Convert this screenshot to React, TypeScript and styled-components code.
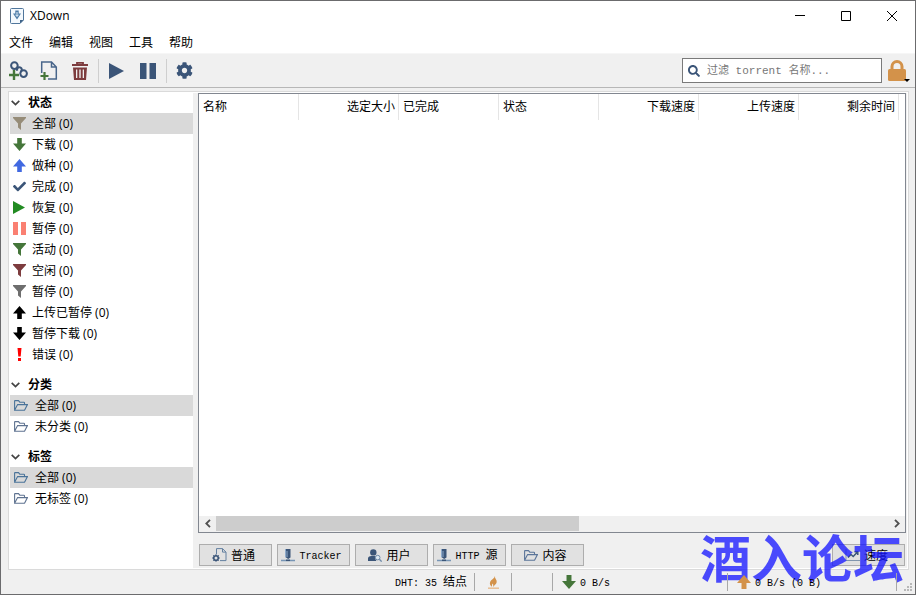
import React from "react";
import styled, { createGlobalStyle, css } from "styled-components";
import { FaCheck, FaCog, FaSearch } from "react-icons/fa";

const navy = "#3b5578";
const green = "#45763a";
const orange = "#d3924a";
const maroon = "#7d3c3e";

const Global = createGlobalStyle`
  * { box-sizing: border-box; }
  body {
    margin: 0;
    background: #f0f0f0;
    color: #000;
    font: 12px/16px "Open Sans", "Noto Sans CJK SC", sans-serif;
  }
  button, input { font: inherit; color: inherit; border-radius: 0; }
  svg { display: block; flex: none; }
`;

const Window = styled.div`
  position: relative;
  display: flex;
  flex-direction: column;
  min-height: 100vh;
  border: 1px solid #6b6b6d;
  background: #f0f0f0;
`;

const TitleBar = styled.header`
  display: flex;
  align-items: center;
  height: 30px;
  padding-left: 9px;
  gap: 6px;
  background: #fff;
`;

const Title = styled.h1`
  flex: 1;
  margin: 0;
  font-size: 12px;
  font-weight: 400;
`;

const Caption = styled.div`
  display: flex;
`;

const PlainButton = styled.button`
  display: flex;
  align-items: center;
  justify-content: center;
  padding: 0;
  border: 0;
  background: transparent;
`;

const CaptionButton = styled(PlainButton)`
  width: 46px;
  height: 29px;
`;

const MenuBar = styled.nav`
  display: flex;
  align-items: center;
  gap: 16px;
  height: 22px;
  padding: 2px 0 0 8px;
  background: #fff;
`;

const Toolbar = styled.div`
  display: flex;
  align-items: center;
  height: 35px;
  padding: 0 5px 0 7px;
  border-top: 1px solid #f6f6f6;
  border-bottom: 1px solid #b7b7b7;
`;

const ToolButton = styled(PlainButton)`
  width: 31px;
  height: 28px;
  color: ${navy};
  &:first-child { width: 25px; padding-right: 4px; }
`;

const ToolSeparator = styled.span`
  width: 1px;
  height: 24px;
  margin: 0 2px 0 3px;
  background: #cfcfcf;
`;

const SearchBox = styled.label`
  display: flex;
  align-items: center;
  gap: 7px;
  width: 200px;
  height: 25px;
  margin-left: auto;
  padding: 0 5px;
  border: 1px solid #7a7a7a;
  background: #fff;
  color: ${navy};
`;

const SearchInput = styled.input`
  flex: 1;
  min-width: 0;
  padding: 0;
  border: 0;
  outline: 0;
  background: transparent;
  font: 11px/16px "Liberation Mono", "Noto Sans CJK SC", monospace;
  &::placeholder { color: #777; opacity: 1; }
`;

const LockButton = styled(PlainButton)`
  position: relative;
  width: 28px;
  height: 26px;
  padding-left: 2px;
`;

const DropMark = styled.span`
  position: absolute;
  right: 0;
  bottom: 2px;
  border: 3px solid transparent;
  border-top-color: #000;
  border-bottom: 0;
`;

const Frame = styled.main`
  display: flex;
  flex: 1;
  margin: 3px 6px 0 7px;
  padding: 1px;
  border: 1px solid #dadada;
  background: #fff;
`;

const Sidebar = styled.aside`
  width: 183px;
`;

const Section = styled.section`
  & + & { margin-top: 10px; }
`;

const SectionTitle = styled.h2`
  display: flex;
  align-items: center;
  gap: 8px;
  height: 20px;
  margin: 0;
  padding-left: 1px;
  font-size: 12px;
  font-weight: 700;
`;

const List = styled.ul`
  margin: 0;
  padding: 0;
  list-style: none;
`;

const FilterRow = styled.button<{ $selected?: boolean; $folder?: boolean }>`
  display: flex;
  align-items: center;
  gap: ${(p) => (p.$folder ? 7 : 6)}px;
  width: 100%;
  height: 21px;
  padding: 0 0 0 ${(p) => (p.$folder ? 4 : 3)}px;
  border: 0;
  background: ${(p) => (p.$selected ? "#d9d9d9" : "transparent")};
  text-align: left;
`;

const Pane = styled.div`
  display: flex;
  flex: 1;
  flex-direction: column;
  min-width: 0;
  padding: 0 1px 2px 5px;
  background: #f0f0f0;
`;

const ListBox = styled.div`
  display: flex;
  flex: 1;
  flex-direction: column;
  border: 1px solid #828790;
  background: #fff;
`;

const TableArea = styled.div`
  flex: 1;
  overflow: hidden;
`;

const Table = styled.table`
  width: 700px;
  table-layout: fixed;
  border-collapse: separate;
  border-spacing: 0;
`;

const Th = styled.th<{ $right?: boolean }>`
  height: 26px;
  padding: 0 3px 0 4px;
  border-right: 1px solid #e5e5e5;
  font-weight: 400;
  text-align: ${(p) => (p.$right ? "right" : "left")};
`;

const ScrollBar = styled.div`
  display: flex;
  height: 16px;
  padding-bottom: 1px;
  background: #f0f0f0;
`;

const ScrollArrow = styled(PlainButton)`
  width: 17px;
`;

const ScrollTrack = styled.div`
  flex: 1;
`;

const ScrollThumb = styled.div`
  width: 54%;
  height: 100%;
  background: #cdcdcd;
`;

const Tabs = styled.div`
  display: flex;
  gap: 5px;
  padding: 11px 1px 0 1px;
`;

const simSun = css`
  font-family: "Liberation Mono", "Noto Sans CJK SC", monospace;
`;

const TabButton = styled.button<{ $last?: boolean }>`
  display: flex;
  align-items: center;
  justify-content: center;
  gap: 4px;
  width: 73px;
  height: 22px;
  margin-left: ${(p) => (p.$last ? "auto" : "0")};
  padding: 0 4px 0 0;
  border: 1px solid #adadad;
  background: #e1e1e1;
  white-space: nowrap;
  ${simSun}
`;

const Label = styled.span`
  padding-top: 3px;
`;

const Latin = styled.span`
  font-size: 10px;
  white-space: pre;
`;

const StatusBar = styled.footer`
  position: relative;
  z-index: 1;
  display: flex;
  align-items: center;
  justify-content: flex-end;
  height: 24px;
  padding-right: 2px;
  ${simSun}
`;

const StatusItem = styled.div<{ $width?: number }>`
  display: flex;
  align-items: center;
  gap: 4px;
  width: ${(p) => (p.$width ? `${p.$width}px` : "auto")};
  height: 18px;
  padding: 0 7px 0 9px;
  border-right: 1px solid #a8a8a8;
  white-space: nowrap;
`;

const Grip = styled.div`
  align-self: flex-end;
  margin: 0 0 2px 7px;
`;

const Watermark = styled.div`
  position: absolute;
  right: 11px;
  bottom: 0;
  color: rgba(20, 20, 255, 0.76);
  font: 700 51px/76px "Noto Sans CJK SC", sans-serif;
  pointer-events: none;
`;

type IconProps = { color?: string };

const Funnel = ({ color }: IconProps) => (
  <svg width="13" height="13" viewBox="0 0 13 13"><path fill={color} d="M0 0h13v1L8 6.5V13L5 10.5v-4L0 1z" /></svg>
);
const Down = ({ color, size = 13 }: IconProps & { size?: number }) => (
  <svg width={size} height={size} viewBox="0 0 13 13"><path fill={color} d="M4.2 0h4.6v5.5h4.2L6.5 13 0 5.5h4.2z" /></svg>
);
const Up = ({ color, size = 13 }: IconProps & { size?: number }) => (
  <svg width={size} height={size} viewBox="0 0 13 13"><path fill={color} d="M4.2 13h4.6V7.5h4.2L6.5 0 0 7.5h4.2z" /></svg>
);
const Play = ({ color }: IconProps) => (
  <svg width="13" height="13" viewBox="0 0 13 13"><path fill={color} d="M0 0 12 6.5 0 13z" /></svg>
);
const Pause = ({ color }: IconProps) => (
  <svg width="13" height="13" viewBox="0 0 13 13"><path fill={color} d="M0 0h5v13H0zM8 0h5v13H8z" /></svg>
);
const Bang = () => (
  <svg width="13" height="13" viewBox="0 0 13 13"><path fill="#f00" d="M4.5 0h4l-.8 8.5H5.3zM5 10h3v3H5z" /></svg>
);
const Folder = ({ color }: IconProps) => (
  <svg width="14" height="11" viewBox="0 0 14 11">
    <path d="M.6 9.8V1.2q0-.6.6-.6h3.3l1.3 1.6h4q.7 0 .7.7v1.6M.6 10.2 3.6 4.6h9.8l-2.6 5.1q-.2.5-.8.5z" fill="none" stroke={color} strokeWidth="1.1" />
  </svg>
);
const Chevron = () => (
  <svg width="9" height="6" viewBox="0 0 9 6"><path d="m.7 .8 3.8 3.7L8.3.8" fill="none" stroke="#444" strokeWidth="1.7" /></svg>
);
const Logo = () => (
  <svg width="14" height="16" viewBox="0 0 14 16">
    <path d="M1.5.5h11q1 0 1 1V12L10 15.5H1.5q-1 0-1-1v-13q0-1 1-1z" fill="#f4f9fd" stroke="#50769c" />
    <path d="M10 15.5V12h3.5z" fill="#3e6288" />
    <path d="M5.3 2.5h3.4v3H11L7 11.5 3 5.5h2.3z" fill="#4c7ba6" />
    <path d="M7 4v4M5.5 6.7 7 8.5l1.5-1.8" fill="none" stroke="#e4f1fa" />
  </svg>
);
const AddLink = () => (
  <svg width="19" height="19" viewBox="0 0 19 19">
    <g fill="none" stroke={navy} strokeWidth="2">
      <circle cx="5.4" cy="4.6" r="3.3" />
      <path d="M8.2 9.8Q7.4 7 9.8 6.3q2.4-.2 3 2 .1 1.8-1.3 2.7" />
      <circle cx="14.6" cy="12.6" r="3.3" />
    </g>
    <path d="M5 9v10M0 14h10" stroke={green} strokeWidth="2.4" />
  </svg>
);
const AddFile = () => (
  <svg width="18" height="19" viewBox="0 0 18 19">
    <path d="M1.7 12V1h9.8l4.8 5v12H8M11.5 1v5h4.8" fill="none" stroke="#48658a" strokeWidth="1.5" />
    <path d="M4.5 11v8M.5 15h8" stroke={green} strokeWidth="2.2" />
  </svg>
);
const Trash = () => (
  <svg width="16" height="18" viewBox="0 0 16 18">
    <path d="M5 2V.8h6V2M0 3h16" fill="none" stroke={maroon} strokeWidth="1.8" />
    <path fill={maroon} fillRule="evenodd" d="M1 5.5h14L14 18H2zM4 7.5v8.5h1.3V7.5zm3.3 0v8.5h1.4V7.5zm3.4 0v8.5H12V7.5z" />
  </svg>
);
const FileGear = () => (
  <svg width="15" height="14" viewBox="0 0 15 14">
    <path d="M4.5 6V.6h6l3.5 3.5v8.5H8M10.5.6v3.5H14" fill="none" stroke="#6480a0" />
    <circle cx="4" cy="10" r="2.3" fill="none" stroke={navy} strokeWidth="1.6" />
    <path d="M4 6.2v1.5M4 12.3v1.5M.2 10h1.5M6.3 10h1.5M1.3 7.3l1 1M5.7 11.7l1 1M6.7 7.3l-1 1M2.3 11.7l-1 1" stroke={navy} />
  </svg>
);
const Tracker = () => (
  <svg width="14" height="14" viewBox="0 0 14 14">
    <path d="M5 1h4.5v8.5L7.2 11 5 9.5z" fill={navy} />
    <path d="M4.5 1v8.5M6 3v6" stroke="#8eabcb" />
    <path d="M0 12.5h14" stroke="#7795b5" strokeWidth="1.5" />
    <path d="M5 12.3h4" stroke={navy} strokeWidth="1.5" />
  </svg>
);
const Peers = () => (
  <svg width="14" height="13" viewBox="0 0 14 13">
    <circle cx="5.3" cy="3.4" r="3.2" fill={navy} />
    <path d="M0 12V9.5Q0 7 3.5 7h3q1 0 1.5.8-1.5 2 .5 4.2z" fill={navy} />
    <circle cx="9.7" cy="8.6" r="2.3" fill="#dce7f0" stroke="#6f8ba9" />
    <path d="m11.4 10.3 2.3 2.3" stroke="#6f8ba9" strokeWidth="1.4" />
  </svg>
);
const Chart = () => (
  <svg width="15" height="13" viewBox="0 0 15 13">
    <path d="M1 0v11.5h14" fill="none" stroke="#8095ad" />
    <path d="m3 8.5 3-3 2.2 2L12.5 3M9.5 2.7h3.3V6" fill="none" stroke={navy} strokeWidth="1.5" />
  </svg>
);
const Flame = () => (
  <svg width="11" height="13" viewBox="0 0 11 13">
    <path d="M7 0q-.3 1.8.9 3.2Q10 6.5 6.8 9L5 11q.8-2.2-.3-3.5Q3.6 8.5 4 10.7 1 8.8 2.2 5.8 3 4.2 4.8 3 6.4 1.8 7 0z" fill={orange} />
    <path d="M0 12.2h11" stroke="#e7bd92" strokeWidth="1.5" />
  </svg>
);

const filters: [string, React.ReactNode][] = [
  ["全部 (0)", <Funnel color="#968c78" />],
  ["下载 (0)", <Down color={green} />],
  ["做种 (0)", <Up color="#4169e1" />],
  ["完成 (0)", <FaCheck size={13} color={navy} />],
  ["恢复 (0)", <Play color="#228b22" />],
  ["暂停 (0)", <Pause color="#fa8072" />],
  ["活动 (0)", <Funnel color={green} />],
  ["空闲 (0)", <Funnel color={maroon} />],
  ["暂停 (0)", <Funnel color="#6e6e6e" />],
  ["上传已暂停 (0)", <Up color="#000" />],
  ["暂停下载 (0)", <Down color="#000" />],
  ["错误 (0)", <Bang />],
];

const folderSections = [
  { title: "分类", items: ["全部 (0)", "未分类 (0)"] },
  { title: "标签", items: ["全部 (0)", "无标签 (0)"] },
];

const columns: [string, boolean][] = [
  ["名称", false],
  ["选定大小", true],
  ["已完成", false],
  ["状态", false],
  ["下载速度", true],
  ["上传速度", true],
  ["剩余时间", true],
];

export default function App() {
  return (
    <>
      <Global />
      <Window>
        <TitleBar>
          <Logo />
          <Title>XDown</Title>
          <Caption>
            <CaptionButton aria-label="最小化">
              <svg width="10" height="10"><path d="M0 4.5h10" stroke="#000" /></svg>
            </CaptionButton>
            <CaptionButton aria-label="最大化">
              <svg width="10" height="10"><path d="M.5.5h9v9h-9z" fill="none" stroke="#000" /></svg>
            </CaptionButton>
            <CaptionButton aria-label="关闭">
              <svg width="10" height="10"><path d="m0 0 10 10M10 0 0 10" stroke="#000" /></svg>
            </CaptionButton>
          </Caption>
        </TitleBar>
        <MenuBar>
          {["文件", "编辑", "视图", "工具", "帮助"].map((m) => (
            <PlainButton key={m}>{m}</PlainButton>
          ))}
        </MenuBar>
        <Toolbar>
          <ToolButton aria-label="添加链接"><AddLink /></ToolButton>
          <ToolButton aria-label="添加文件"><AddFile /></ToolButton>
          <ToolButton aria-label="删除"><Trash /></ToolButton>
          <ToolSeparator />
          <ToolButton aria-label="恢复">
            <svg width="15" height="16" viewBox="0 0 15 16"><path fill={navy} d="M0 0 15 8 0 16z" /></svg>
          </ToolButton>
          <ToolButton aria-label="暂停">
            <svg width="16" height="16" viewBox="0 0 16 16"><path fill={navy} d="M0 0h6.5v16H0zM9.5 0H16v16H9.5z" /></svg>
          </ToolButton>
          <ToolSeparator />
          <ToolButton aria-label="选项"><FaCog size={17} /></ToolButton>
          <SearchBox>
            <FaSearch size={12} />
            <SearchInput aria-label="过滤" placeholder="过滤 torrent 名称..." />
          </SearchBox>
          <LockButton aria-label="锁定">
            <svg width="18" height="21" viewBox="0 0 18 21">
              <path d="M4 10V6.5a5 5 0 0 1 10 0V10" fill="none" stroke={orange} strokeWidth="3" />
              <rect y="9" width="18" height="12" rx="1.5" fill={orange} />
            </svg>
            <DropMark />
          </LockButton>
        </Toolbar>
        <Frame>
          <Sidebar>
            <Section>
              <SectionTitle><Chevron />状态</SectionTitle>
              <List>
                {filters.map(([label, icon], i) => (
                  <li key={i}><FilterRow $selected={i === 0}>{icon}{label}</FilterRow></li>
                ))}
              </List>
            </Section>
            {folderSections.map((s) => (
              <Section key={s.title}>
                <SectionTitle><Chevron />{s.title}</SectionTitle>
                <List>
                  {s.items.map((label, i) => (
                    <li key={label}>
                      <FilterRow $folder $selected={i === 0}>
                        <Folder color={i === 0 ? "#4a7399" : "#5f7391"} />
                        {label}
                      </FilterRow>
                    </li>
                  ))}
                </List>
              </Section>
            ))}
          </Sidebar>
          <Pane>
            <ListBox>
              <TableArea>
                <Table>
                  <thead>
                    <tr>{columns.map(([c, right]) => <Th key={c} $right={right}>{c}</Th>)}</tr>
                  </thead>
                </Table>
              </TableArea>
              <ScrollBar>
                <ScrollArrow aria-label="向左滚动">
                  <svg width="6" height="9" viewBox="0 0 6 9"><path d="M5 .8 1.3 4.5 5 8.2" fill="none" stroke="#505050" strokeWidth="1.8" /></svg>
                </ScrollArrow>
                <ScrollTrack><ScrollThumb /></ScrollTrack>
                <ScrollArrow aria-label="向右滚动">
                  <svg width="6" height="9" viewBox="0 0 6 9"><path d="m1 .8 3.7 3.7L1 8.2" fill="none" stroke="#505050" strokeWidth="1.8" /></svg>
                </ScrollArrow>
              </ScrollBar>
            </ListBox>
            <Tabs>
              <TabButton><FileGear /><Label>普通</Label></TabButton>
              <TabButton><Tracker /><Label><Latin>Tracker</Latin></Label></TabButton>
              <TabButton><Peers /><Label>用户</Label></TabButton>
              <TabButton><Tracker /><Label><Latin>HTTP </Latin>源</Label></TabButton>
              <TabButton><Folder color="#5b7599" /><Label>内容</Label></TabButton>
              <TabButton $last><Chart /><Label>速度</Label></TabButton>
            </Tabs>
          </Pane>
        </Frame>
        <StatusBar>
          <StatusItem><Label><Latin>DHT: 35 </Latin>结点</Label></StatusItem>
          <StatusItem $width={37}><span /><Flame /></StatusItem>
          <StatusItem $width={41} />
          <StatusItem $width={175}><Down color={green} size={14} /><Label><Latin>0 B/s</Latin></Label></StatusItem>
          <StatusItem $width={169}><Up color={orange} size={14} /><Label><Latin>0 B/s (0 B)</Latin></Label></StatusItem>
          <Grip>
            <svg width="9" height="9" viewBox="0 0 9 9">
              <path fill="#b8b8b8" d="M6 0h2v2H6zM3 3h2v2H3zM6 3h2v2H6zM0 6h2v2H0zM3 6h2v2H3zM6 6h2v2H6z" />
            </svg>
          </Grip>
        </StatusBar>
        <Watermark>酒入论坛</Watermark>
      </Window>
    </>
  );
}
